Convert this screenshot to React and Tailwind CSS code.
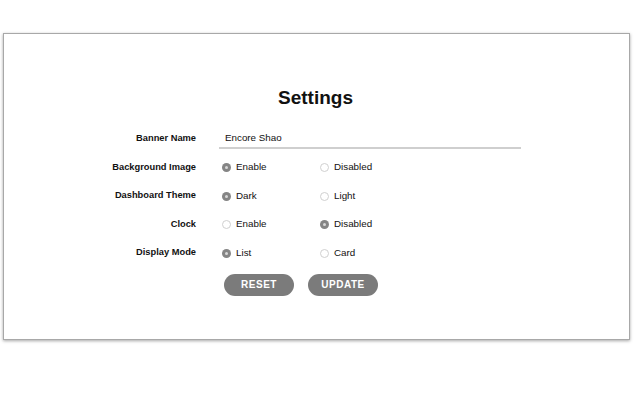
import React from "react";

function Radio({ checked, label }) {
  return (
    <div className="flex items-center">
      {checked ? (
        <span className="w-[9px] h-[9px] rounded-full bg-[#858585] flex items-center justify-center">
          <span className="w-[3px] h-[3px] rounded-full bg-[#d8d8d8]" />
        </span>
      ) : (
        <span className="w-[9px] h-[9px] rounded-full border border-[#d0d0d0] bg-white" />
      )}
      <span className="ml-[5px] text-[9.8px] text-[#111]">{label}</span>
    </div>
  );
}

function Row({ label, children }) {
  return (
    <div className="flex items-center h-[28.5px]">
      <div className="w-[192px] text-right text-[9.3px] font-bold text-[#111]">{label}</div>
      <div className="ml-[23px] flex items-center">{children}</div>
    </div>
  );
}

function RadioPair({ a, b, first }) {
  return (
    <>
      <div className="w-[101px] pl-[3px]">
        <Radio checked={first} label={a} />
      </div>
      <div>
        <Radio checked={!first} label={b} />
      </div>
    </>
  );
}

export default function App() {
  return (
    <div className="w-[640px] h-[400px] bg-white pt-[33px] pl-[3px]" style={{ fontFamily: '"Liberation Sans", Arial, sans-serif' }}>
      <div className="w-[627px] h-[307px] border border-[#a8a8a8] shadow-[0_1px_3px_rgba(0,0,0,0.35)] bg-white">
        <div className="pt-[52px] text-center text-[19px] font-bold leading-[24px] text-[#111] pr-[2px]">Settings</div>
        <div className="mt-[15px]">
          <Row label="Banner Name">
            <div className="w-[302px] h-[18px] border-b-2 border-[#cfcfcf] flex items-center pl-[6px] text-[9.8px] text-[#111] mt-[1px]">
              Encore Shao
            </div>
          </Row>
          <Row label="Background Image">
            <RadioPair a="Enable" b="Disabled" first={true} />
          </Row>
          <Row label="Dashboard Theme">
            <RadioPair a="Dark" b="Light" first={true} />
          </Row>
          <Row label="Clock">
            <RadioPair a="Enable" b="Disabled" first={false} />
          </Row>
          <Row label="Display Mode">
            <RadioPair a="List" b="Card" first={true} />
          </Row>
          <div className="flex mt-[6px] pl-[220px] gap-[14px]">
            <button className="w-[70px] h-[22px] rounded-full bg-[#7b7b7b] text-white text-[10px] font-bold tracking-[0.5px]">RESET</button>
            <button className="w-[70px] h-[22px] rounded-full bg-[#7b7b7b] text-white text-[10px] font-bold tracking-[0.5px]">UPDATE</button>
          </div>
        </div>
      </div>
    </div>
  );
}
